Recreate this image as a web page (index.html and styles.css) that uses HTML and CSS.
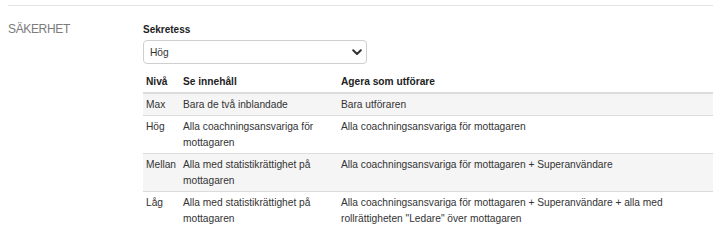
FILE: index.html
```html
<!DOCTYPE html>
<html lang="sv">
<head>
<meta charset="utf-8">
<link rel="stylesheet" href="styles.css">
</head>
<body>
<div class="page">
  <section class="section">
    <div class="section-title">SÄKERHET</div>
    <div class="section-body">
      <label class="field-label">Sekretess</label>
      <div class="select">
        <span class="select-value">Hög</span>
        <svg class="chevron" width="10" height="7" viewBox="0 0 10 7"><path d="M1.2 1.2 L5 5 L8.8 1.2" fill="none" stroke="#333" stroke-width="2" stroke-linecap="round" stroke-linejoin="round"/></svg>
      </div>
      <table class="levels">
        <colgroup>
          <col class="c1"><col class="c2"><col class="c3">
        </colgroup>
        <thead>
          <tr><th>Nivå</th><th>Se innehåll</th><th>Agera som utförare</th></tr>
        </thead>
        <tbody>
          <tr class="odd"><td>Max</td><td>Bara de två inblandade</td><td>Bara utföraren</td></tr>
          <tr><td>Hög</td><td>Alla coachningsansvariga för mottagaren</td><td>Alla coachningsansvariga för mottagaren</td></tr>
          <tr class="odd"><td>Mellan</td><td>Alla med statistikrättighet på mottagaren</td><td>Alla coachningsansvariga för mottagaren + Superanvändare</td></tr>
          <tr><td>Låg</td><td>Alla med statistikrättighet på mottagaren</td><td>Alla coachningsansvariga för mottagaren + Superanvändare + alla med rollrättigheten "Ledare" över mottagaren</td></tr>
        </tbody>
      </table>
    </div>
  </section>
</div>
</body>
</html>
```

FILE: styles.css
```css
html, body {
  margin: 0;
  padding: 0;
  background: #fff;
}
body {
  font-family: "Liberation Sans", Arial, sans-serif;
  color: #333;
}
.page {
  padding: 5px 9px 0 8px;
}
.section {
  border-top: 1px solid #e3e3e3;
  display: flex;
  padding-top: 16px;
}
.section-title {
  width: 135px;
  flex: none;
  font-size: 12px;
  letter-spacing: -0.35px;
  line-height: 14px;
  color: #7b7b7b;
  padding-top: 0;
}
.section-body {
  flex: 1;
  display: flex;
  flex-direction: column;
  align-items: flex-start;
}
.field-label {
  font-size: 10px;
  font-weight: bold;
  line-height: 14px;
  color: #222;
  margin-bottom: 3px;
  padding-top: 1px;
}
.select {
  box-sizing: border-box;
  width: 224px;
  height: 24px;
  border: 1px solid #cfcfcf;
  border-radius: 4px;
  display: flex;
  align-items: center;
  justify-content: space-between;
  padding: 0 4px 0 6px;
  font-size: 10.2px;
  color: #333;
}
.chevron {
  display: block;
}
.levels {
  margin-top: 7px;
  width: 570px;
  border-collapse: collapse;
  font-size: 10.2px;
  line-height: 16px;
  table-layout: fixed;
}
.c1 { width: 37px; }
.c2 { width: 158px; }
.c3 { width: auto; }
.levels th {
  text-align: left;
  font-weight: bold;
  color: #222;
  padding: 3px 3px 2px;
  border-bottom: 2px solid #dcdcdc;
  vertical-align: top;
}
.levels td {
  padding: 3px 3px 2px;
  border-bottom: 1px solid #dcdcdc;
  vertical-align: top;
}
.levels tbody tr:last-child td {
  border-bottom: none;
}
.levels tr.odd td {
  background: #f5f5f5;
}
```
